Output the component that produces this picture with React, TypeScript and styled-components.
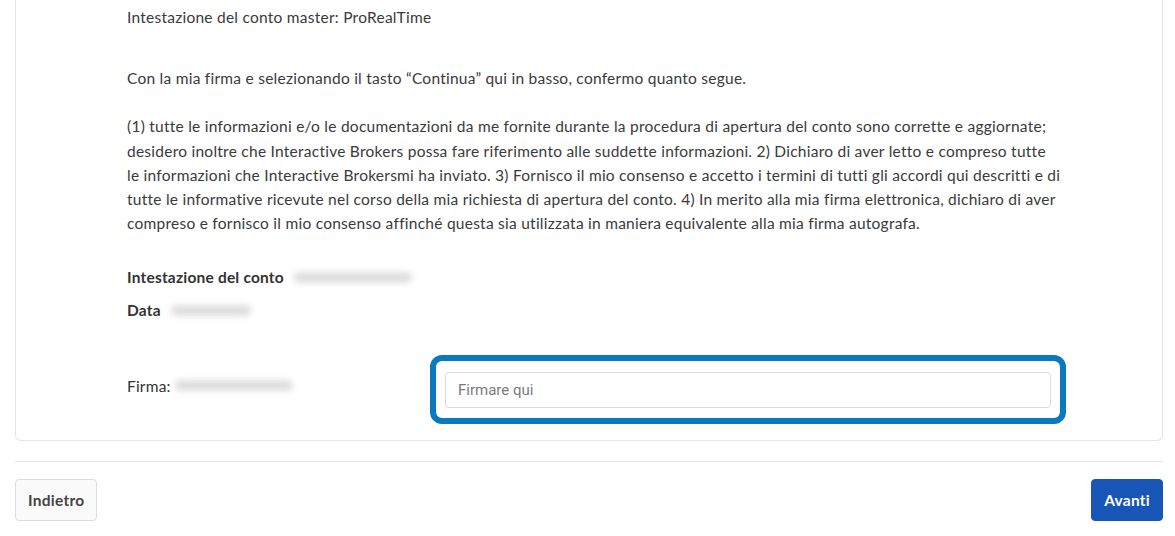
import React from "react";
import styled, { createGlobalStyle } from "styled-components";

const GlobalStyle = createGlobalStyle`
  body {
    margin: 0;
    background: #fff;
    font-family: Lato, "Open Sans", sans-serif;
    color: #3a3a3a;
  }
`;

const Page = styled.div`
  padding: 0 12px 0 15px;
  width: 1148px;
`;

const Card = styled.div`
  border: 1px solid #e4e4e4;
  border-top: none;
  border-radius: 0 0 6px 6px;
  padding: 5px 24px 16px 111px;
`;

const Text = styled.p<{ $gap?: number }>`
  margin: 0;
  margin-top: ${(p) => p.$gap ?? 0}px;
  font-size: 15.5px;
  letter-spacing: 0.25px;
  line-height: 24.2px;
  white-space: nowrap;
`;

const Field = styled.div<{ $gap: number }>`
  display: flex;
  align-items: center;
  gap: 6px;
  margin-top: ${(p) => p.$gap}px;
  font-size: 15.5px;
  letter-spacing: 0.2px;
  line-height: 24px;
`;

const Label = styled.span`
  font-weight: 700;
  color: #333;
`;

const Blurred = styled.span<{ $w: number }>`
  display: inline-block;
  width: ${(p) => p.$w}px;
  height: 11px;
  margin-left: 4px;
  border-radius: 5px;
  background: #dedede;
  filter: blur(3px);
`;

const SignRow = styled.div`
  display: flex;
  align-items: center;
  margin-top: 33px;
`;

const SignLabel = styled.div`
  width: 303px;
  display: flex;
  align-items: center;
  margin-bottom: 8px;
  font-size: 15.5px;
  letter-spacing: 0.2px;
  color: #333;
`;

const Highlight = styled.div`
  box-sizing: border-box;
  width: 636px;
  padding: 11px 9px 10px;
  border: 6px solid #0a79bd;
  border-radius: 12px;
`;

const Input = styled.input`
  box-sizing: border-box;
  display: block;
  width: 100%;
  height: 36px;
  border: 1px solid #dcdcdc;
  border-radius: 4px;
  padding: 0 12px;
  font-family: Roboto, "Open Sans", sans-serif;
  font-size: 15px;
  color: #333;
  outline: none;
  &::placeholder {
    color: #7a7a7a;
  }
`;

const Divider = styled.hr`
  margin: 20px 0 17px;
  border: none;
  border-top: 1px solid #e4e4e4;
`;

const Footer = styled.div`
  display: flex;
  justify-content: space-between;
`;

const Button = styled.button<{ $primary?: boolean }>`
  height: 42px;
  padding: 0 12px;
  border-radius: 4px;
  font-family: Lato, sans-serif;
  font-size: 15.5px;
  letter-spacing: 0.25px;
  font-weight: 700;
  cursor: pointer;
  border: 1px solid ${(p) => (p.$primary ? "#1755b6" : "#dcdcdc")};
  background: ${(p) => (p.$primary ? "#1755b6" : "#fafafa")};
  color: ${(p) => (p.$primary ? "#fff" : "#444")};
`;

export default function App() {
  return (
    <Page>
      <GlobalStyle />
      <Card>
        <Text>Intestazione del conto master: ProRealTime</Text>
        <Text $gap={37}>
          Con la mia firma e selezionando il tasto “Continua” qui in basso, confermo quanto segue.
        </Text>
        <Text $gap={24}>
          (1) tutte le informazioni e/o le documentazioni da me fornite durante la procedura di apertura del conto sono corrette e aggiornate;
          <br />
          desidero inoltre che Interactive Brokers possa fare riferimento alle suddette informazioni. 2) Dichiaro di aver letto e compreso tutte
          <br />
          le informazioni che Interactive Brokersmi ha inviato. 3) Fornisco il mio consenso e accetto i termini di tutti gli accordi qui descritti e di
          <br />
          tutte le informative ricevute nel corso della mia richiesta di apertura del conto. 4) In merito alla mia firma elettronica, dichiaro di aver
          <br />
          compreso e fornisco il mio consenso affinché questa sia utilizzata in maniera equivalente alla mia firma autografa.
        </Text>
        <Field $gap={30}>
          <Label>Intestazione del conto</Label>
          <Blurred $w={118} />
        </Field>
        <Field $gap={9}>
          <Label>Data</Label>
          <Blurred $w={80} />
        </Field>
        <SignRow>
          <SignLabel>
            Firma:
            <Blurred $w={118} />
          </SignLabel>
          <Highlight>
            <Input placeholder="Firmare qui" />
          </Highlight>
        </SignRow>
      </Card>
      <Divider />
      <Footer>
        <Button>Indietro</Button>
        <Button $primary>Avanti</Button>
      </Footer>
    </Page>
  );
}
